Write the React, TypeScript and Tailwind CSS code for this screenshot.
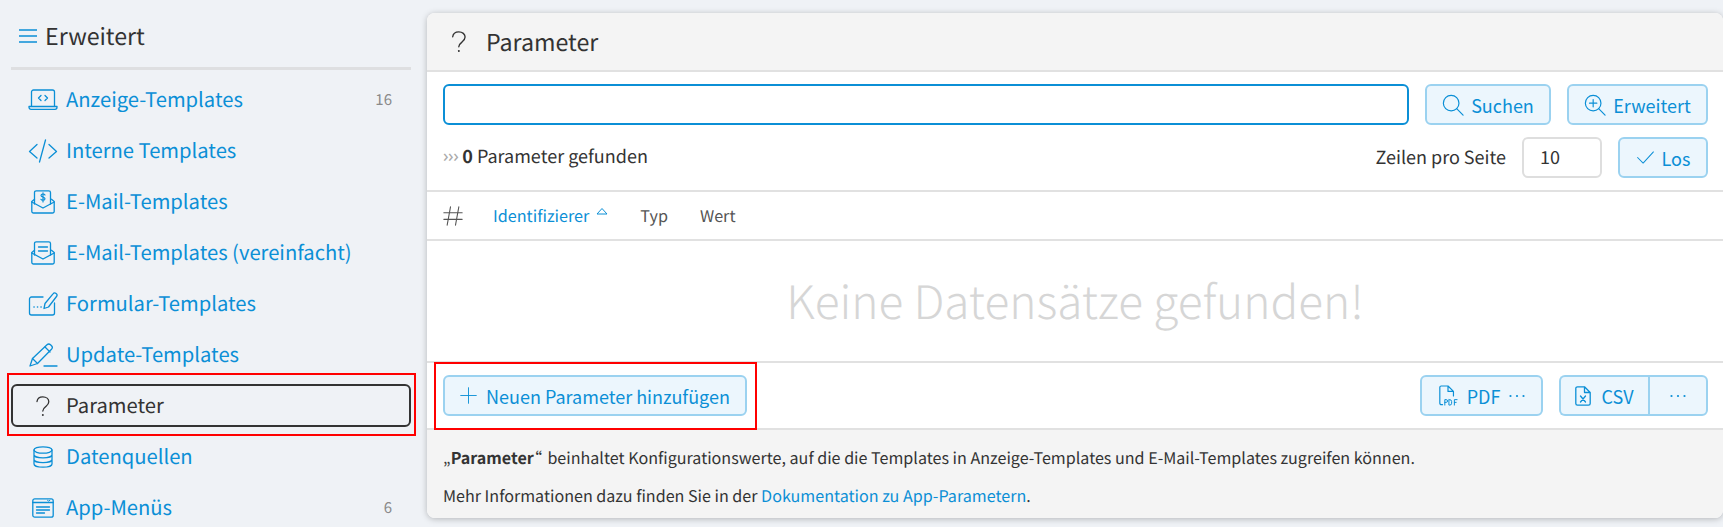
import React from "react";

const S = ({ children, className = "", vb = "0 0 24 24" }: { children: React.ReactNode; className?: string; vb?: string }) => (
  <svg viewBox={vb} fill="none" stroke="currentColor" strokeWidth={1.3} strokeLinecap="round" strokeLinejoin="round" className={className}>
    {children}
  </svg>
);

const Dots = () => (
  <svg viewBox="0 0 16 4" className="w-[16px] h-[4px]" fill="currentColor">
    <circle cx="1.500" cy="2" r="1.100" />
    <circle cx="8" cy="2" r="1.100" />
    <circle cx="14.500" cy="2" r="1.100" />
  </svg>
);

const IconLaptop = () => (
  <S vb="0 0 30 24" className="w-[30px] h-[24px]">
    <path d="M3.500 18V4A2 2 0 0 1 5.500 2h19a2 2 0 0 1 2 2v14" />
    <path d="M1 18.500h28v.8a2 2 0 0 1-2 2H3a2 2 0 0 1-2-2z" />
    <path d="M13 7.500l-2.500 2.500 2.500 2.500M17 7.500l2.500 2.500-2.500 2.500" />
  </S>
);
const IconCode = () => (
  <S vb="0 0 30 24" className="w-[30px] h-[24px]">
    <path d="M9 5.500L1.500 12.500 9 19M21 5.500l7.500 7L21 19M17.500 1L11.500 23" />
  </S>
);
const MailBase = () => (
  <>
    <path d="M3.500 14V2.500A1.700 1.700 0 0 1 5.200 0.800h12.600a1.700 1.700 0 0 1 1.700 1.700V14" />
    <path d="M3.500 9.300L0.800 11.500v9.800A1.700 1.700 0 0 0 2.500 23h19a1.700 1.700 0 0 0 1.700-1.700v-9.800l-2.700-2.200" />
    <path d="M0.800 12l11.200 6 11.200-6" />
  </>
);
const IconMailDollar = () => (
  <S className="w-[24px] h-[24px]">
    <MailBase />
    <path d="M14 5c-.4-.7-1-1-2-1-1.200 0-2 .6-2 1.500 0 2.200 4 1.100 4 3.300 0 .9-.8 1.500-2 1.500-1 0-1.700-.3-2.100-1M12 2.800v9.200" strokeWidth={1.200} />
  </S>
);
const IconMailList = () => (
  <S className="w-[24px] h-[24px]">
    <MailBase />
    <path d="M7.500 6h9M7.500 10h9" />
  </S>
);
const IconForm = () => (
  <S vb="0 0 30 24" className="w-[30px] h-[24px]">
    <path d="M15 5H3.500A2 2 0 0 0 1.500 7v14a2 2 0 0 0 2 2H24.500a2 2 0 0 0 2-2V11" />
    <path d="M16 16.500l1-5L25 1.800a2 2 0 0 1 3.500 2.700L20.500 15z" />
    <path d="M6 15h.1M9.500 15h.1M13 15h.1" strokeWidth={1.600} />
  </S>
);
const IconPen = () => (
  <S vb="0 0 30 24" className="w-[30px] h-[24px]">
    <path d="M2 23l2.500-7.500L19 1.800a2.500 2.500 0 0 1 3.500 0l1 1a2.500 2.500 0 0 1 0 3.500L9.500 20.500z" />
    <path d="M4.500 15.500l5 5M17 4l5 5M16 23h13" />
  </S>
);
const IconQuestion = ({ className = "w-[14px] h-[20px]" }: { className?: string }) => (
  <S vb="0 0 14 20" className={className}>
    <path d="M1 5.500C1.400 2.500 3.600 0.800 6.800 0.800c3.500 0 6 2.200 6 5 0 2.400-1.400 3.500-3 4.800C8 12 6.800 13 6.800 15" />
    <path d="M6.800 19h.1" strokeWidth={1.800} />
  </S>
);
const IconDb = () => (
  <S vb="0 0 20 22" className="w-[20px] h-[22px]">
    <ellipse cx="10" cy="4" rx="9" ry="3.200" />
    <path d="M1 4v14c0 1.800 4 3.200 9 3.200s9-1.400 9-3.200V4M1 8.700c0 1.800 4 3.200 9 3.200s9-1.400 9-3.200M1 13.400c0 1.800 4 3.200 9 3.200s9-1.400 9-3.200" />
  </S>
);
const IconMenu = () => (
  <S vb="0 0 22 20" className="w-[22px] h-[20px]">
    <rect x="0.800" y="0.800" width="20.400" height="18.400" rx="2" />
    <path d="M0.800 4.500h20.400M4.500 9h13M4.500 12h13M4.500 15h8" />
    <path d="M15.500 2.300l1.200.8 1.200-.8" strokeWidth={1} />
  </S>
);

const items: { icon: React.ReactNode; label: string; count?: string; active?: boolean }[] = [
  { icon: <IconLaptop />, label: "Anzeige-Templates", count: "16" },
  { icon: <IconCode />, label: "Interne Templates" },
  { icon: <IconMailDollar />, label: "E-Mail-Templates" },
  { icon: <IconMailList />, label: "E-Mail-Templates (vereinfacht)" },
  { icon: <IconForm />, label: "Formular-Templates" },
  { icon: <IconPen />, label: "Update-Templates" },
  { icon: <IconQuestion />, label: "Parameter", active: true },
  { icon: <IconDb />, label: "Datenquellen" },
  { icon: <IconMenu />, label: "App-Menüs", count: "6" },
];

const btn =
  "h-[41px] inline-flex items-center justify-center border-2 border-[#9bd2f0] bg-[#ecf6fd] text-[#0b8fd6] rounded-[6px] text-[18px] leading-none";

export default function App() {
  return (
    <div
      className="w-[1723px] h-[527px] overflow-hidden bg-[#eff2f6] flex text-[#333] relative [text-rendering:geometricPrecision]"
      style={{ fontFamily: '"Noto Sans CJK SC", "Noto Sans", sans-serif' }}
    >
      {/* Sidebar */}
      <aside className="w-[427px] shrink-0 pl-[11px] pr-[16px]">
        <div className="h-[67px] flex items-center pl-[8px] pt-[5px]">
          <svg viewBox="0 0 18 14" className="w-[18px] h-[14px] text-[#0b8fd6]" stroke="currentColor" strokeWidth={1.3} fill="none">
            <path d="M0 1h18M0 7h18M0 13h18" />
          </svg>
          <span className="ml-[8px] text-[23.200px] leading-none">Erweitert</span>
        </div>
        <div className="h-[3px] bg-[#dedfe1] mb-[8px]" />
        <ul className="flex flex-col">
          {items.map((it) => (
            <li
              key={it.label}
              className={
                "h-[43px] mb-[8px] shrink-0 flex items-center rounded-[6px] pr-[19px] " +
                (it.active ? "border-2 border-[#333] text-[#333] pr-[17px]" : "text-[#0b8fd6]")
              }
            >
              <span className={"shrink-0 flex justify-center " + (it.active ? "w-[53px] pl-[7px]" : "w-[55px] pl-[9px]")}>{it.icon}</span>
              <span className="text-[20.200px] leading-none whitespace-nowrap -mt-[1px]">{it.label}</span>
              {it.count && <span className="ml-auto mt-[1px] text-[15px] text-[#8a8a8a]">{it.count}</span>}
            </li>
          ))}
        </ul>
      </aside>

      {/* Main */}
      <main className="flex-1 mt-[13px] h-[505px] bg-white rounded-[8px] shadow-[0_1px_6px_rgba(0,0,0,0.25)] flex flex-col overflow-hidden">
        <header className="h-[59px] shrink-0 bg-[#f4f4f4] border-b-2 border-[#e1e1e1] flex items-center pl-[24px]">
          <IconQuestion className="w-[16px] h-[21px]" />
          <span className="ml-[19px] text-[23.200px] leading-none">Parameter</span>
        </header>

        <section className="h-[120px] shrink-0 border-b-2 border-[#e1e1e1] pl-[16px] pr-[15px] pt-[12px]">
          <div className="flex">
            <div className="flex-1 h-[41px] border-2 border-[#0b8fd6] rounded-[6px] bg-white" />
            <button className={btn + " w-[126px] ml-[16px] gap-[7px]"}>
              <S className="w-[22px] h-[22px]">
                <circle cx="10" cy="10" r="8.500" />
                <path d="M16 16l7 7" />
              </S>
              Suchen
            </button>
            <button className={btn + " w-[141px] ml-[16px] gap-[7px]"}>
              <S className="w-[22px] h-[22px]">
                <circle cx="10" cy="10" r="8.500" />
                <path d="M16 16l7 7M10 6v8M6 10h8" />
              </S>
              Erweitert
            </button>
          </div>
          <div className="flex items-center mt-[12px]">
            <span className="text-[18px] leading-none text-[#aaa] tracking-[-0.500px] mr-[4px] -mt-[4px] font-['Noto_Sans']">›››</span>
            <span className="text-[18px] leading-none -mt-[4px]">
              <b>0</b> Parameter gefunden
            </span>
            <span className="ml-auto text-[18px] leading-none -mt-[2px]">Zeilen pro Seite</span>
            <div className="w-[80px] h-[41px] ml-[16px] border-2 border-[#dedede] rounded-[6px] flex items-center pl-[16px] text-[18px]">10</div>
            <button className={btn + " w-[90px] ml-[16px] gap-[7px]"}>
              <S className="w-[19px] h-[19px]">
                <path d="M2 12l7 7L22 5" />
              </S>
              Los
            </button>
          </div>
        </section>

        <section className="h-[49px] shrink-0 border-b-2 border-[#e1e1e1] flex items-center pl-[16px] text-[16.200px] text-[#555]">
          <S className="w-[20px] h-[20px] text-[#555]">
            <path d="M9 1L5 23M19 1l-4 22M1 8h22M1 16h22" />
          </S>
          <span className="ml-[30px] text-[#0b8fd6]">Identifizierer</span>
          <svg viewBox="0 0 12 8" className="w-[12px] h-[8px] ml-[7px] -mt-[10px] text-[#0b8fd6]" fill="none" stroke="currentColor" strokeWidth={1}>
            <path d="M1 7h10L6 1.500z" />
          </svg>
          <span className="ml-[32px]">Typ</span>
          <span className="ml-[32px]">Wert</span>
        </section>

        <section className="h-[122px] shrink-0 border-b-2 border-[#e1e1e1] flex items-center justify-center pb-[2px]">
          <span className="text-[46px] leading-none font-light text-[#d6d6d6]">Keine Datensätze gefunden!</span>
        </section>

        <section className="h-[67px] shrink-0 border-b-2 border-[#e1e1e1] flex items-center pl-[16px] pr-[15px]">
          <button className={btn + " w-[304px] gap-[9px]"}>
            <S className="w-[17px] h-[17px]">
              <path d="M12 1v22M1 12h22" />
            </S>
            Neuen Parameter hinzufügen
          </button>
          <button className={btn + " w-[123px] ml-auto gap-[9px]"}>
            <S vb="0 0 22 24" className="w-[20px] h-[22px]">
              <path d="M5 21.500H3.500A1.500 1.500 0 0 1 2 20V2.500A1.500 1.500 0 0 1 3.500 1H11l6 6v5M11 1v6h6" />
              <path d="M7.500 22v-6h1.500a1.500 1.500 0 0 1 0 3H7.500M12 16v6h1a2 2 0 0 0 2-2v-2a2 2 0 0 0-2-2zM21 16h-3v6M18 19h2" strokeWidth={1.100} />
            </S>
            PDF
            <Dots />
          </button>
          <div className="flex ml-[16px]">
            <button className={btn + " w-[89px] rounded-r-none border-r-0 gap-[10px]"}>
              <S vb="0 0 16 20" className="w-[16px] h-[20px]">
                <path d="M2.500 0.800h7l5.700 5.700v11a1.700 1.700 0 0 1-1.700 1.700h-11a1.700 1.700 0 0 1-1.700-1.700V2.500a1.700 1.700 0 0 1 1.700-1.700zM9.500 0.800v5.700h5.700M5.500 10l5 6M10.500 10l-5 6" />
              </S>
              CSV
            </button>
            <button className={btn + " w-[60px] rounded-l-none"}>
              <Dots />
            </button>
          </div>
        </section>

        <footer className="flex-1 bg-[#f4f4f4] px-[16px] pt-[15px] text-[16.100px] leading-[24px] text-[#333]">
          <p>
            „<b>Parameter</b>
            <span className="[font-feature-settings:'palt'] mr-[2px]">“</span> beinhaltet Konfigurationswerte, auf die die Templates in Anzeige-Templates und E-Mail-Templates zugreifen können.
          </p>
          <p className="mt-[14px]">
            Mehr Informationen dazu finden Sie in der <span className="text-[#0b8fd6]">Dokumentation zu App-Parametern</span>.
          </p>
        </footer>
      </main>

      {/* Red annotation frames */}
      <div className="absolute left-[7px] top-[373px] w-[409px] h-[63px] border-2 border-[#f00]" />
      <div className="absolute left-[434px] top-[362px] w-[323px] h-[68px] border-2 border-[#f00]" />
    </div>
  );
}
